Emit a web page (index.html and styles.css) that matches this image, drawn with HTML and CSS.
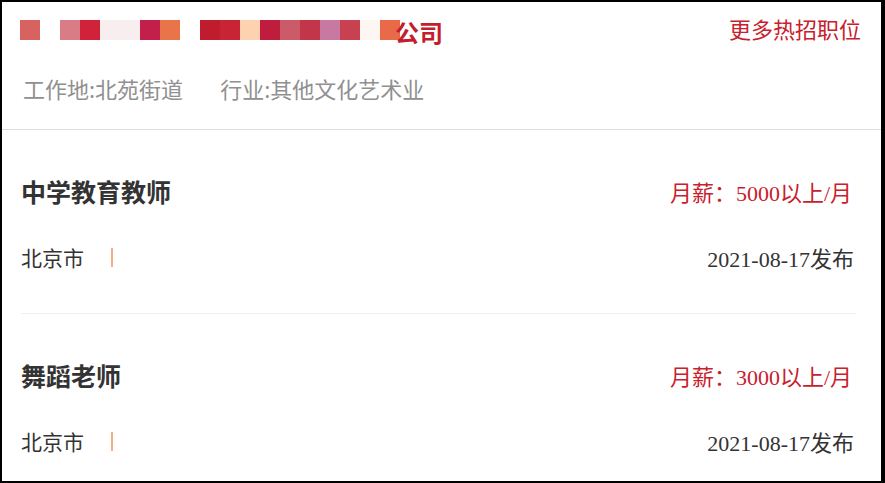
FILE: index.html
```html
<!DOCTYPE html>
<html lang="zh-CN">
<head>
    <meta charset="UTF-8">
    <meta name="viewport" content="width=device-width, initial-scale=1.0">
    <title>招聘职位</title>
    <link rel="stylesheet" href="styles.css">
</head>
<body>

<div class="frame">
    <!-- Company header -->
    <div class="company-head">
        <div class="company-top">
            <div class="company-name">
                <span class="mosaic">
                    <i style="background:#d86262"></i><i style="background:#fff"></i><i style="background:#d97c86"></i><i style="background:#d0233a"></i><i style="background:#f8eef0"></i><i style="background:#f8eef0"></i><i style="background:#c2204b"></i><i style="background:#e97449"></i><i style="background:#fff"></i><i style="background:#bf1c2d"></i><i style="background:#c82434"></i><i style="background:#fed1b0"></i><i style="background:#c01c3d"></i><i style="background:#cc5b69"></i><i style="background:#c33549"></i><i style="background:#c879a1"></i><i style="background:#c84151"></i><i style="background:#fdf7f3"></i><i style="background:#e86a49"></i>
                </span>
                <span class="company-suffix">公司</span>
            </div>
            <a class="more-link" href="#">更多热招职位</a>
        </div>
        <div class="company-meta">
            <span>工作地:北苑街道</span>
            <span>行业:其他文化艺术业</span>
        </div>
    </div>

    <!-- Job list -->
    <div class="job-list">
        <div class="job">
            <div class="job-row">
                <span class="job-title">中学教育教师</span>
                <span class="job-salary">月薪：5000以上/月</span>
            </div>
            <div class="job-row job-sub">
                <span class="job-city">北京市<span class="sep"></span></span>
                <span class="job-date">2021-08-17发布</span>
            </div>
        </div>
        <div class="job">
            <div class="job-row">
                <span class="job-title">舞蹈老师</span>
                <span class="job-salary">月薪：3000以上/月</span>
            </div>
            <div class="job-row job-sub">
                <span class="job-city">北京市<span class="sep"></span></span>
                <span class="job-date">2021-08-17发布</span>
            </div>
        </div>
    </div>
</div>

</body>
</html>
```

FILE: styles.css
```css
html, body {
    margin: 0;
    padding: 0;
    background-color: #000;
}
body {
    font-family: "Liberation Serif", "Noto Sans CJK SC", serif;
}
.frame {
    box-sizing: border-box;
    width: 885px;
    height: 483px;
    border-style: solid;
    border-color: #000;
    border-width: 2px 4px 2px 2px;
    background-color: #fff;
    overflow: hidden;
}
.company-head {
    padding: 15px 20px 26px 18px;
    border-bottom: 1px solid #dcdcdc;
}
.company-top {
    display: flex;
    justify-content: space-between;
    align-items: flex-start;
}
.company-name {
    display: flex;
    align-items: flex-start;
    height: 30px;
}
.mosaic {
    display: flex;
    margin-top: 3px;
}
.mosaic i {
    display: block;
    width: 20px;
    height: 20px;
}
.company-suffix {
    margin-left: -5px;
    font-family: "Noto Sans CJK SC", sans-serif;
    font-size: 24px;
    font-weight: bold;
    line-height: 30px;
    color: #c41e2e;
}
.more-link {
    font-family: "Noto Sans CJK SC", sans-serif;
    font-size: 22px;
    line-height: 22px;
    color: #c8202c;
    text-decoration: none;
}
.company-meta {
    display: flex;
    gap: 37px;
    margin-top: 26px;
    padding-left: 3px;
    font-family: "Noto Sans CJK SC", sans-serif;
    font-size: 22px;
    line-height: 30px;
    color: #909090;
}
.job-list {
    padding: 0 25px 0 19px;
}
.job {
    padding: 46px 0 41px;
    border-bottom: 1px solid #efeff4;
}
.job-row {
    display: flex;
    justify-content: space-between;
    align-items: center;
    height: 30px;
}
.job-sub {
    margin-top: 36px;
}
.job-title {
    font-family: "Noto Sans CJK SC", sans-serif;
    font-size: 25px;
    font-weight: bold;
    color: #333;
}
.job-salary {
    margin-right: 4px;
    font-size: 22px;
    color: #c8202c;
}
.job-city {
    display: flex;
    align-items: center;
    font-family: "Noto Sans CJK SC", sans-serif;
    font-size: 21px;
    color: #333;
}
.sep {
    display: inline-block;
    width: 2px;
    height: 19px;
    margin-left: 27px;
    background-color: #f7ad86;
}
.job-date {
    margin-right: 2px;
    font-size: 22px;
    color: #333;
}
```
